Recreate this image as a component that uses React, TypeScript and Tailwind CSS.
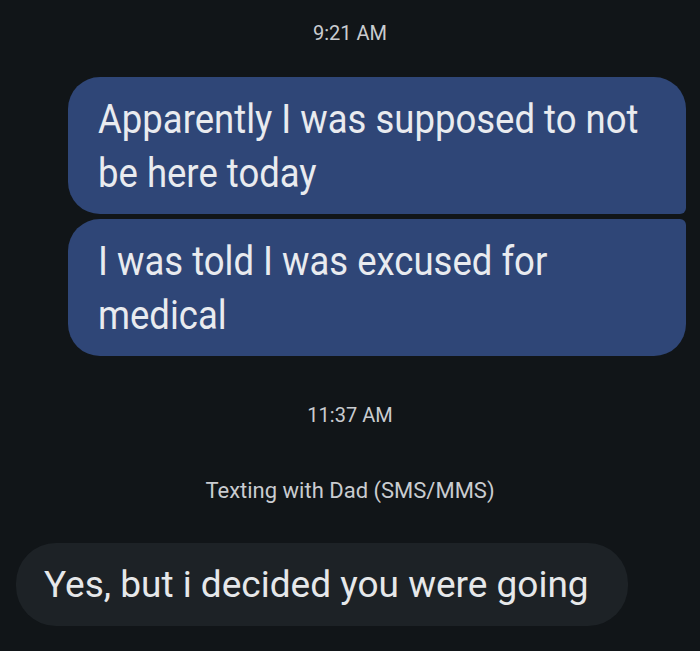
import * as React from "react";

export default function App() {
  return (
    <div
      className="h-[651px] w-[700px] overflow-hidden bg-[#111518] text-[#e9ebef]"
      style={{ fontFamily: "Roboto, 'Noto Sans', sans-serif" }}
    >
      <Stamp className="pt-[20px]">9:21 AM</Stamp>

      <div className="mt-[31px] flex flex-col items-end gap-[5px] pr-[14px]">
        <SentBubble className="rounded-tr-[32px] rounded-br-[6px]">
          Apparently I was supposed to not
          <br />
          be here today
        </SentBubble>
        <SentBubble className="rounded-tr-[6px] rounded-br-[32px]">
          I was told I was excused for
          <br />
          medical
        </SentBubble>
      </div>

      <Stamp className="mt-[46px]">11:37 AM</Stamp>
      <div className="mt-[49px] text-center text-[22px] leading-[28px] text-[#c9ccd0]">
        Texting with Dad (SMS/MMS)
      </div>

      <div className="mt-[38px] pl-[16px]">
        <div className="inline-block rounded-[40px] bg-[#1d2226] py-[19px] pl-[28px] pr-[39px] text-[37px] leading-[45px] text-[#e6e8ea]">
          Yes, but i decided you were going
        </div>
      </div>
    </div>
  );
}

function Stamp({ className = "", children }: { className?: string; children: React.ReactNode }) {
  return (
    <div className={`text-center text-[20px] leading-[26px] text-[#c9ccd0] ${className}`}>
      {children}
    </div>
  );
}

function SentBubble({ className = "", children }: { className?: string; children: React.ReactNode }) {
  return (
    <div
      className={`w-[618px] rounded-l-[32px] bg-[#2f4677] py-[21px] pl-[30px] pr-[20px] text-[36.5px] leading-[47.5px] ${className}`}
    >
      <div className="origin-center scale-y-[1.13]">{children}</div>
    </div>
  );
}
